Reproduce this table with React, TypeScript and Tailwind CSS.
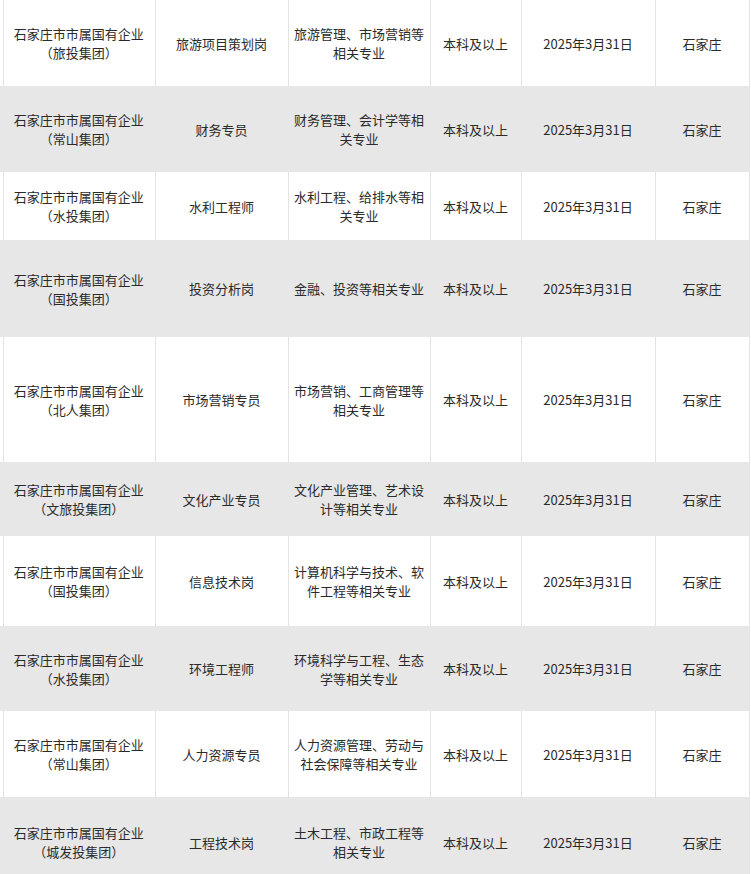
const rows = [
  { h: "h-[86px]", org: "旅投集团", job: "旅游项目策划岗", major: "旅游管理、市场营销等相关专业" },
  { h: "h-[86px]", org: "常山集团", job: "财务专员", major: "财务管理、会计学等相关专业" },
  { h: "h-[68px]", org: "水投集团", job: "水利工程师", major: "水利工程、给排水等相关专业" },
  { h: "h-[97px]", org: "国投集团", job: "投资分析岗", major: "金融、投资等相关专业" },
  { h: "h-[125px]", org: "北人集团", job: "市场营销专员", major: "市场营销、工商管理等相关专业" },
  { h: "h-[74px]", org: "文旅投集团", job: "文化产业专员", major: "文化产业管理、艺术设计等相关专业" },
  { h: "h-[90px]", org: "国投集团", job: "信息技术岗", major: "计算机科学与技术、软件工程等相关专业" },
  { h: "h-[85px]", org: "水投集团", job: "环境工程师", major: "环境科学与工程、生态学等相关专业" },
  { h: "h-[86px]", org: "常山集团", job: "人力资源专员", major: "人力资源管理、劳动与社会保障等相关专业" },
  { h: "h-[90px]", org: "城发投集团", job: "工程技术岗", major: "土木工程、市政工程等相关专业" },
];

export default function App() {
  return (
    <div
      className="min-h-screen bg-white text-[13px] leading-[19px] text-[#2a2a2a]"
      style={{ fontFamily: '"Noto Sans CJK SC", "Noto Sans", sans-serif' }}
    >
      <table className="w-[749px] table-fixed border-collapse">
        <colgroup>
          <col className="w-[155px]" />
          <col className="w-[133px]" />
          <col className="w-[142px]" />
          <col className="w-[91px]" />
          <col className="w-[134px]" />
          <col className="w-[94px]" />
        </colgroup>
        <tbody>
          {rows.map((r, i) => {
            const grey = i % 2 === 1;
            const cell = `border-x px-[5px] text-center align-middle ${
              grey ? "border-[#e7e7e7]" : "border-[#e3e3e3]"
            }`;
            return (
              <tr key={i} className={`${r.h} ${grey ? "bg-[#e7e7e7]" : "bg-white"}`}>
                <td
                  className={`${cell} border-l-0 pl-[8px] ${
                    grey ? "" : "shadow-[inset_3px_0_0_#ffffff,inset_4px_0_0_#e3e3e3]"
                  }`}
                >
                  石家庄市市属国有企业
                  <br />
                  （{r.org}）
                </td>
                <td className={cell}>{r.job}</td>
                <td className={cell}>{r.major}</td>
                <td className={cell}>本科及以上</td>
                <td className={cell}>2025年3月31日</td>
                <td className={cell}>石家庄</td>
              </tr>
            );
          })}
        </tbody>
      </table>
    </div>
  );
}
